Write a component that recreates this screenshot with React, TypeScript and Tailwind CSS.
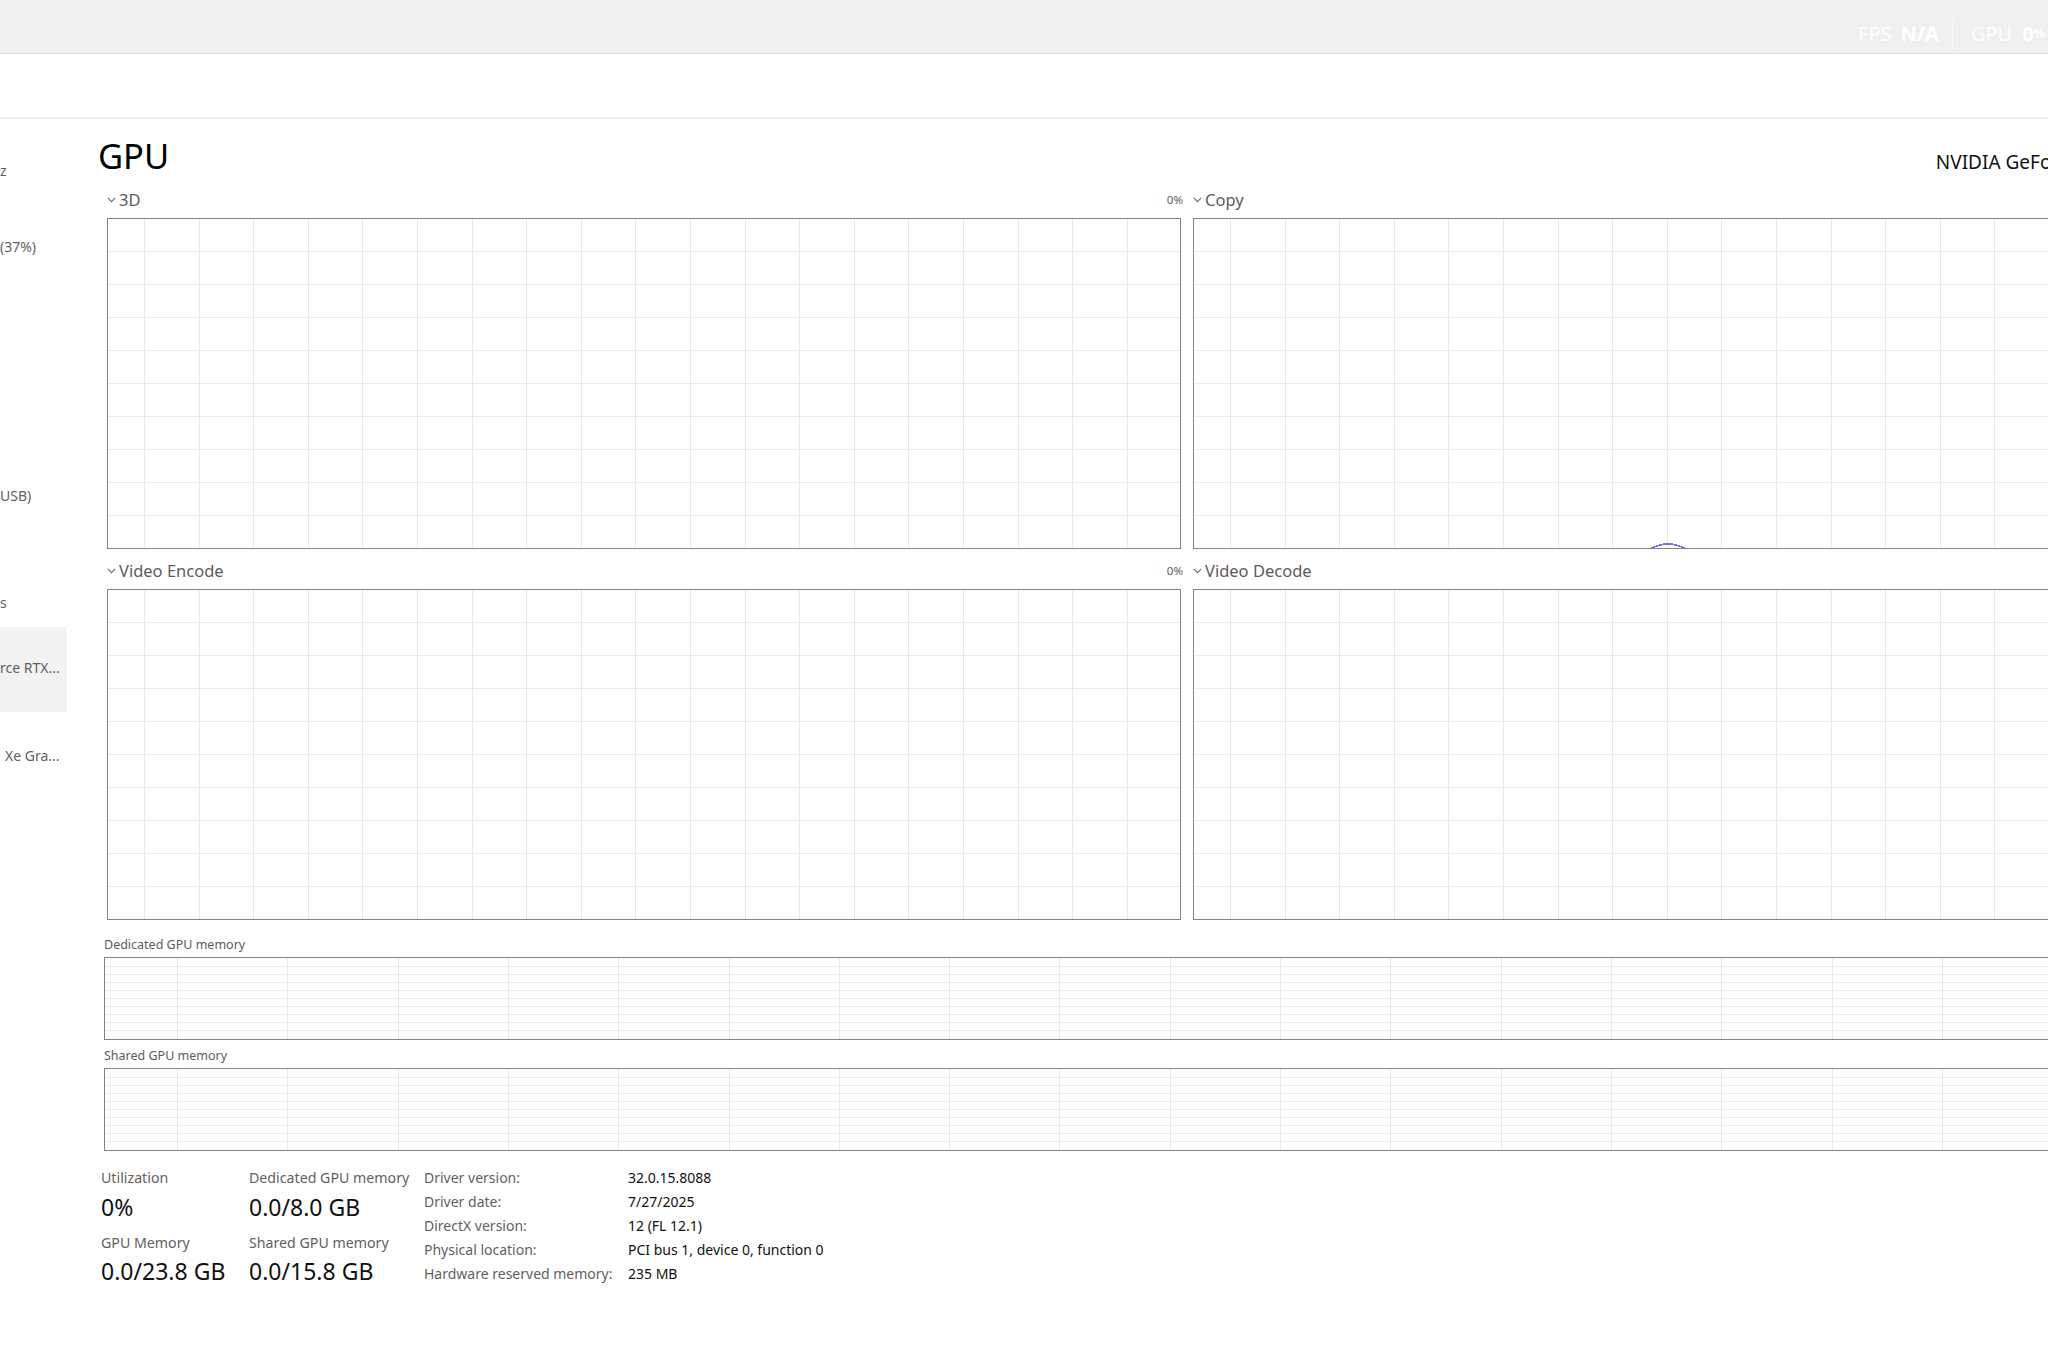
import type { ReactNode } from "react";

type GridProps = {
  offset: number;
  step: number;
  rows: number;
  children?: ReactNode;
};

const Grid = ({ offset, step, rows, children }: GridProps) => {
  const cols = Array.from({ length: 40 }, (_, i) => Math.round(offset + i * step) + 0.5);
  const lines = Array.from({ length: rows - 1 }, (_, i) => ((i + 1) * 100) / rows);

  return (
    <div className="h-full w-full border border-[#838383] bg-white">
      <svg className="block h-full w-full" shapeRendering="crispEdges">
        {cols.map((x) => (
          <line key={x} x1={x} x2={x} y1="0" y2="100%" stroke="#e9e9e9" strokeWidth="1" />
        ))}
        {lines.map((y) => (
          <line key={y} x1="0" x2="100%" y1={`${y}%`} y2={`${y}%`} stroke="#ececec" strokeWidth="1" />
        ))}
        {children}
      </svg>
    </div>
  );
};

const Chevron = () => (
  <svg width="9" height="6" viewBox="0 0 9 6" className="mr-[3px]">
    <path d="M0.8 0.8 L4.5 4.6 L8.2 0.8" fill="none" stroke="#6b6b6b" strokeWidth="1.1" />
  </svg>
);

type EngineProps = {
  name: string;
  pct?: string;
  children?: ReactNode;
};

const Engine = ({ name, pct, children }: EngineProps) => (
  <div className="flex flex-col">
    <div className="mb-[5px] flex h-[26px] items-center justify-between">
      <div className="flex items-center text-[16.5px] text-[#5c5c5c]">
        <Chevron />
        {name}
      </div>
      {pct && <span className="-mr-[2px] text-[11.5px] text-[#5c5c5c]">{pct}</span>}
    </div>
    <div className="h-[331px]">
      <Grid offset={36} step={54.6} rows={10}>
        {children}
      </Grid>
    </div>
  </div>
);

const MemoryChart = ({ label }: { label: string }) => (
  <div className="flex flex-col">
    <div className="mb-[2px] flex h-[20px] items-center text-[12.5px] text-[#5c5c5c]">{label}</div>
    <div className="h-[83px]">
      <Grid offset={72} step={110.3} rows={10} />
    </div>
  </div>
);

const sidebarText = "whitespace-nowrap text-[14px] leading-[20px] text-[#5f5f5f]";
const statLabel = "text-[14.2px] leading-[20px] text-[#5f5f5f]";
const statValue = "text-[23px] leading-[30px] text-[#111]";

const details = [
  ["Driver version:", "32.0.15.8088"],
  ["Driver date:", "7/27/2025"],
  ["DirectX version:", "12 (FL 12.1)"],
  ["Physical location:", "PCI bus 1, device 0, function 0"],
  ["Hardware reserved memory:", "235 MB"],
];

const App = () => {
  return (
    <div className="h-[1372px] w-[2048px] overflow-hidden bg-white font-['Noto_Sans',sans-serif]">
      {/* title bar with the game overlay counters */}
      <div className="flex h-[54px] items-center overflow-hidden border-b border-[#e2e2e2] bg-[#f0f0f0] pl-[1858px] pt-[15px]">
        <div className="flex shrink-0 items-center whitespace-nowrap text-[20px] text-white">
          <span>FPS</span>
          <span className="ml-[9px] font-bold">N/A</span>
          <span className="ml-[13px] mr-[18px] h-[30px] w-px bg-[#f7f7f7]" />
          <span>GPU</span>
          <span className="ml-[10px] font-bold">0</span>
          <span className="text-[13px] font-bold">%</span>
        </div>
      </div>

      {/* command bar */}
      <div className="h-[65px] border-b-2 border-[#efefef] bg-white" />

      <div className="flex">
        {/* device list, scrolled sideways */}
        <div className="flex w-[67px] shrink-0 flex-col overflow-hidden">
          <div className={`mt-[42px] ${sidebarText}`}>z</div>
          <div className={`mt-[56px] ${sidebarText}`}>(37%)</div>
          <div className={`mt-[229px] ${sidebarText}`}>USB)</div>
          <div className={`mt-[87px] ${sidebarText}`}>s</div>
          <div className="mt-[14px] h-[85px] bg-[#f3f3f3] pt-[31px]">
            <div className={sidebarText}>rce RTX...</div>
          </div>
          <div className={`mt-[34px] pl-[5px] ${sidebarText}`}>Xe Gra...</div>
        </div>

        {/* performance page */}
        <div className="w-[2170px] shrink-0 pl-[37px] pt-[19px]">
          <div className="flex h-[36px] items-baseline justify-between">
            <h1 className="-ml-[6px] text-[34.5px] leading-[36px] text-black">GPU</h1>
            <span className="-mr-[40px] whitespace-nowrap text-[19px] text-[#111]">NVIDIA GeForce RTX 4060 Laptop GPU</span>
          </div>

          <div className="ml-[3px] mt-[13px] grid grid-cols-[1074px_1074px] gap-x-[12px] gap-y-[9px]">
            <Engine name="3D" pct="0%" />
            <Engine name="Copy" pct="0%">
              <path d="M456 330 Q474 320 492 330" fill="none" stroke="#8a68e0" strokeWidth="1.6" />
            </Engine>
            <Engine name="Video Encode" pct="0%" />
            <Engine name="Video Decode" pct="0%" />
          </div>

          <div className="mt-[15px] flex flex-col gap-[6px]">
            <MemoryChart label="Dedicated GPU memory" />
            <MemoryChart label="Shared GPU memory" />
          </div>

          <div className="-ml-[3px] mt-[15px] grid grid-cols-[148px_175px_204px_auto]">
            <div className="flex flex-col pt-[2px]">
              <span className={statLabel}>Utilization</span>
              <span className={`mt-[4px] ${statValue}`}>0%</span>
              <span className={`mt-[11px] ${statLabel}`}>GPU Memory</span>
              <span className={`mt-[3px] ${statValue}`}>0.0/23.8 GB</span>
            </div>
            <div className="flex flex-col pt-[2px]">
              <span className={statLabel}>Dedicated GPU memory</span>
              <span className={`mt-[4px] ${statValue}`}>0.0/8.0 GB</span>
              <span className={`mt-[11px] ${statLabel}`}>Shared GPU memory</span>
              <span className={`mt-[3px] ${statValue}`}>0.0/15.8 GB</span>
            </div>
            <div className="flex flex-col">
              {details.map(([k]) => (
                <span key={k} className="text-[14px] leading-[24px] text-[#5f5f5f]">{k}</span>
              ))}
            </div>
            <div className="flex flex-col">
              {details.map(([k, v]) => (
                <span key={k} className="text-[14px] leading-[24px] text-[#111]">{v}</span>
              ))}
            </div>
          </div>
        </div>
      </div>
    </div>
  );
};

export default App;
